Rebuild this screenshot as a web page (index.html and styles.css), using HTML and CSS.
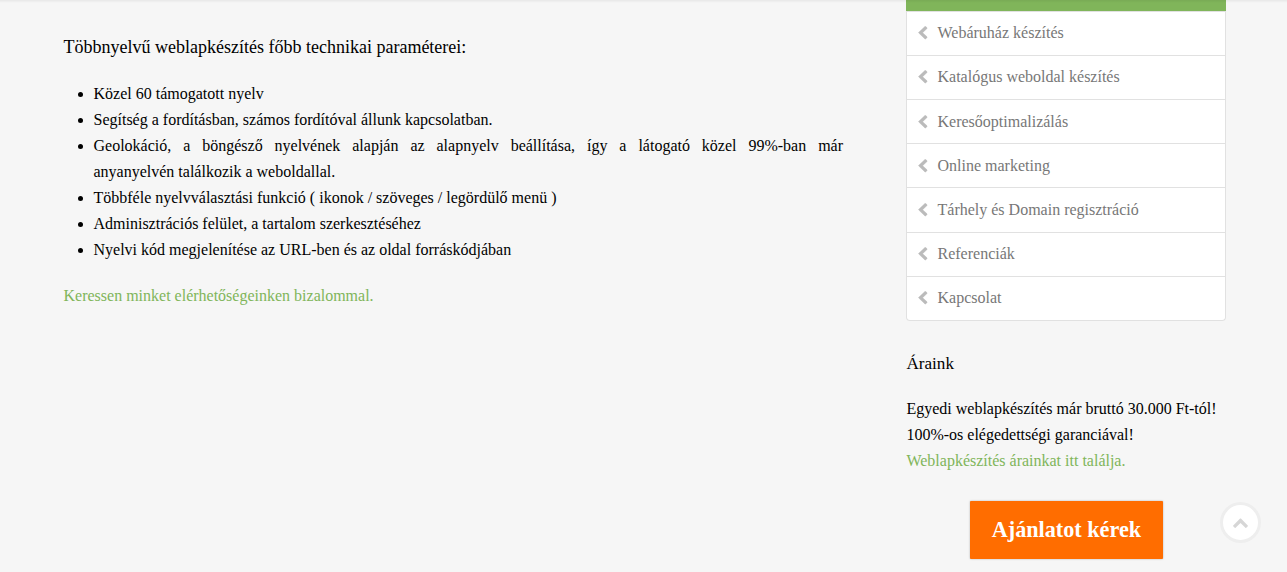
FILE: index.html
```html
<!DOCTYPE html>
<html lang="hu">
<head>
<meta charset="utf-8">
<title>Többnyelvű weblapkészítés</title>
<link rel="stylesheet" href="styles.css">
</head>
<body>
<svg width="0" height="0" class="defs">
<symbol id="left" viewBox="0 0 10 14"><path transform="translate(.6 .3) scale(.0083 .0079) translate(-410 -26)" stroke="#bbb" stroke-width="50" d="M1427 301l-531 531 531 531q19 19 19 45t-19 45l-166 166q-19 19-45 19t-45-19l-742-742q-19-19-19-45t19-45l742-742q19-19 45-19t45 19l166 166q19 19 19 45t-19 45z"/></symbol>
</svg>
<div class="page">
<main class="content">
<h4 class="title">Többnyelvű weblapkészítés főbb technikai paraméterei:</h4>
<ul class="features">
<li>Közel 60 támogatott nyelv</li>
<li>Segítség a fordításban, számos fordítóval állunk kapcsolatban.</li>
<li>Geolokáció, a böngésző nyelvének alapján az alapnyelv beállítása, így a látogató közel 99%-ban már anyanyelvén&nbsp;találkozik a weboldallal.</li>
<li>Többféle nyelvválasztási funkció ( ikonok / szöveges / legördülő menü )</li>
<li>Adminisztrációs felület, a tartalom szerkesztéséhez</li>
<li>Nyelvi kód megjelenítése az URL-ben és az oldal forráskódjában</li>
</ul>
<a class="link">Keressen minket elérhetőségeinken bizalommal.</a>
</main>
<aside class="sidebar">
<nav class="menu">
<div class="active"></div>
<a class="item"><svg class="chev"><use href="#left"/></svg>Webáruház készítés</a>
<a class="item"><svg class="chev"><use href="#left"/></svg>Katalógus weboldal készítés</a>
<a class="item"><svg class="chev"><use href="#left"/></svg>Keresőoptimalizálás</a>
<a class="item"><svg class="chev"><use href="#left"/></svg>Online marketing</a>
<a class="item"><svg class="chev"><use href="#left"/></svg>Tárhely és Domain regisztráció</a>
<a class="item"><svg class="chev"><use href="#left"/></svg>Referenciák</a>
<a class="item"><svg class="chev"><use href="#left"/></svg>Kapcsolat</a>
</nav>
<h5 class="subtitle">Áraink</h5>
<p class="prices">Egyedi weblapkészítés már bruttó 30.000 Ft-tól!<br>100%-os elégedettségi garanciával!<br><a class="link">Weblapkészítés árainkat itt találja.</a></p>
<a class="cta">Ajánlatot kérek</a>
</aside>
</div>
<a class="totop"><svg viewBox="90 435 1612 1080"><path d="M1683 1331l-166 165q-19 19-45 19t-45-19l-531-531-531 531q-19 19-45 19t-45-19l-166-165q-19-19-19-45.500t19-45.500l742-741q19-19 45-19t45 19l742 741q19 19 19 45.500t-19 45.500z"/></svg></a>
</body>
</html>
```
FILE: styles.css
```css
* { box-sizing: border-box; }
body {
  margin: 0;
  height: 572px;
  overflow: hidden;
  background: #f6f6f6;
  color: #000;
  font: 16px/26px "Liberation Serif", serif;
}
body::before {
  content: "";
  position: absolute;
  inset: 0 0 auto;
  height: 3px;
  background: linear-gradient(rgba(0, 0, 0, .06), rgba(0, 0, 0, 0));
}
.defs { position: absolute; }
.page { display: flex; justify-content: space-between; padding: 0 60.600px 0 63.500px; }
.content { width: 779.500px; padding-top: 34px; }
.title { margin: 0 0 21px; font-size: 18px; line-height: 26px; font-weight: 400; }
.features { margin: 0 0 20px; padding-left: 30px; text-align: justify; }
.link { color: #80b55a; }
.sidebar { width: 320px; display: flex; flex-direction: column; }
.menu { background: #fff; border: 1px solid #e1e1e1; border-top: 0; border-radius: 0 0 4px 4px; }
.active { height: 10.600px; margin: 0 -1px; background: #80b55a; }
.item {
  display: flex;
  align-items: center;
  height: 44.200px;
  padding: .2px 0 0 11px;
  border-top: 1px solid #e1e1e1;
  color: #777;
}
.chev { width: 10px; height: 14px; margin-right: 9.100px; fill: #bbb; }
.subtitle { margin: 30.400px 0 19px; font-size: 17.150px; line-height: 26px; font-weight: 400; }
.prices { margin: 0; }
.cta {
  align-self: center;
  width: 193px;
  height: 58px;
  margin-top: 27px;
  background: #ff6d00;
  border-radius: 1px;
  box-shadow: 0 0 2px rgba(0, 0, 0, .3);
  color: #fff;
  font-size: 22.200px;
  font-weight: 700;
  line-height: 57px;
  text-align: center;
}
.totop {
  position: absolute;
  left: 1220px;
  top: 502px;
  width: 41px;
  height: 41px;
  display: flex;
  align-items: center;
  justify-content: center;
  background: #fff;
  border: 3px solid #eee;
  border-radius: 50%;
}
.totop svg { width: 15px; height: 10px; margin-top: 1px; fill: #d6d6d6; }
```
